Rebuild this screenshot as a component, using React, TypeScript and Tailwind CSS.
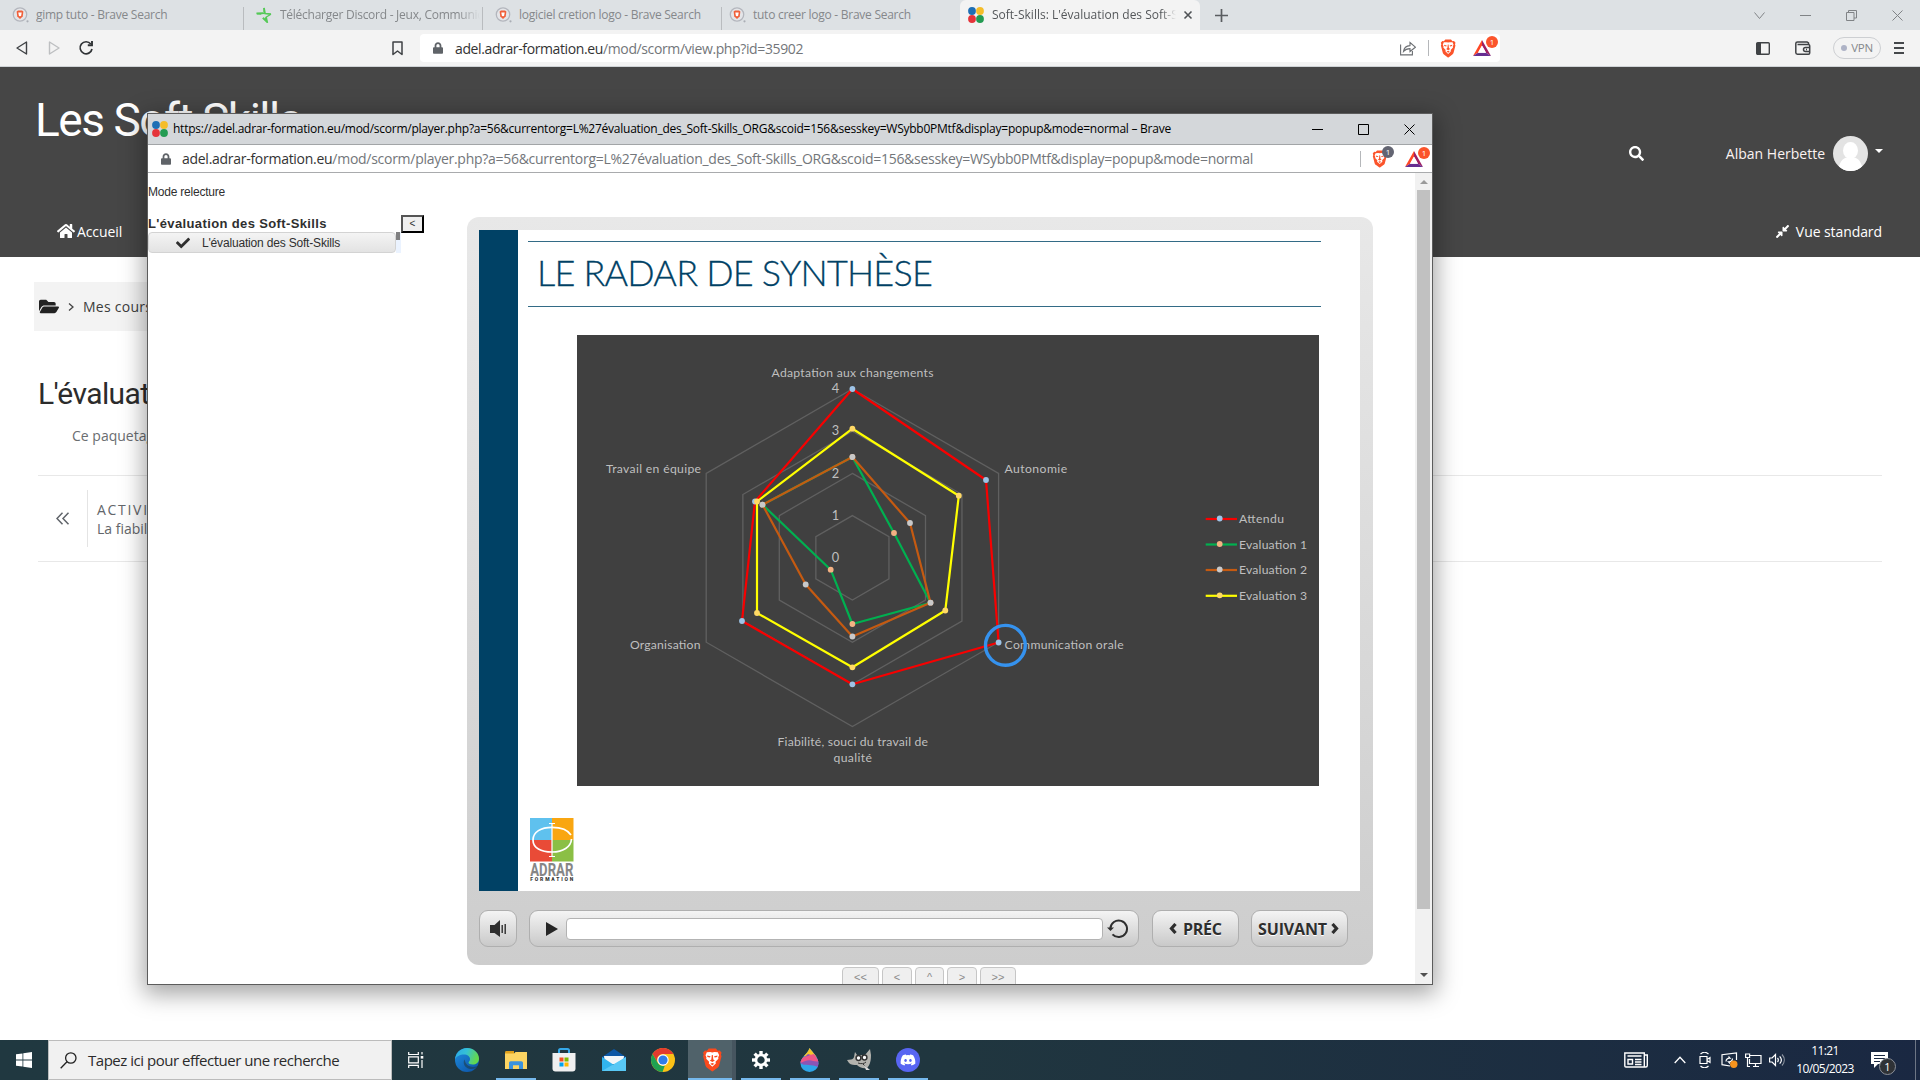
import React from "react";
import {
  FaHome,
  FaFolderOpen,
  FaSearch,
  FaCheck,
  FaCompressAlt,
  FaAngleDoubleLeft,
  FaDiscord,
  FaLock,
} from "react-icons/fa";

const PATH =
  "/mod/scorm/player.php?a=56&currentorg=L%27évaluation_des_Soft-Skills_ORG&scoid=156&sesskey=WSybb0PMtf&display=popup&mode=normal";

/* ---------- Shared icons ---------- */

function BraveIcon({ size = 18, color = "#fb542b", className = "" }: { size?: number; color?: string; className?: string }) {
  return (
    <svg width={size * 0.86} height={size} viewBox="0 0 20 24" className={className}>
      <path
        d="M13.6 0.6 15.4 2.7 17.4 2.4 19.3 4.7 18.6 6.5 19.2 8.3 16.9 17.2c-.4 1.4-.9 2-2 2.8L10.8 23.1c-.5.4-1.1.4-1.6 0L5.1 20c-1.100-.8-1.600-1.400-2-2.800L.8 8.300l.6-1.800L.7 4.700 2.600 2.400l2 .3L6.400.6Z"
        fill={color}
      />
      <path
        d="M10 4.400 12 4l3.500.2L16.800 7.300l-.9 1.900.2 1.500-2.900 3.100.3 1.800L10 18.800 6.500 15.600l.3-1.800-2.900-3.100.2-1.500-.9-1.900L4.500 4.200 8 4Z"
        fill="#fff"
      />
      <path
        d="M4.800 7.400 8.200 8.300 7.600 9.400 5.100 8.900ZM15.200 7.400 11.800 8.300 12.400 9.400 14.900 8.900ZM9.500 7h1l.5 4.500 1.500 1.100L10 14.100 7.500 12.600 9 11.500ZM8 15.700 10 14.900l2 .8-2 1.600Z"
        fill={color}
      />
    </svg>
  );
}

function BatIcon() {
  return (
    <svg width="18" height="16" viewBox="0 0 18 16">
      <path d="M9 0 0 16 5 12.800 9 5.500Z" fill="#ff4724" />
      <path d="M9 0 18 16 13 12.800 9 5.500Z" fill="#9e1f63" />
      <path d="M0 16h18l-5-3.200H5Z" fill="#662d91" />
      <path d="M9 5.500 5 12.800h8Z" fill="#fff" />
    </svg>
  );
}

function Badge({ tone }: { tone: string }) {
  return (
    <span
      className={`absolute -right-[7px] -top-[4px] flex h-3 w-3 items-center justify-center rounded-full text-[8px] leading-none text-white ${tone}`}
    >
      1
    </span>
  );
}

function FourDots() {
  return (
    <svg width="16" height="16" viewBox="0 0 16 16" className="shrink-0">
      <circle cx="4" cy="4" r="3.900" fill="#1f6fb5" />
      <circle cx="12" cy="4" r="3.900" fill="#f5bd2a" />
      <circle cx="4" cy="12" r="3.900" fill="#e5343a" />
      <circle cx="12" cy="12" r="3.900" fill="#249b52" />
    </svg>
  );
}

function SearchFavicon() {
  return (
    <svg width="17" height="17" viewBox="0 0 17 17" className="shrink-0">
      <circle cx="8" cy="7.500" r="6.700" fill="#e4e5e8" stroke="#b3b6bd" strokeWidth="1.300" />
      <path d="M4.600 4.500 6 3.500h4l1.400 1-.7 5L8 12 5.300 9.500Z" fill="#f0603a" />
      <path d="M6.300 5.500h3.400l-.5 2.800L8 9.500 6.800 8.300Z" fill="#fff" />
      <circle cx="15.500" cy="14.300" r="1.100" fill="#aaaeb5" />
    </svg>
  );
}

function Lock() {
  return <FaLock className="h-3 w-[10px] shrink-0 text-[#5f6368]" />;
}

/* ---------- Browser chrome ---------- */

function InactiveTab({ icon, children, width }: { icon: React.ReactNode; children: React.ReactNode; width: string }) {
  return (
    <div className={`flex h-[30px] shrink-0 items-center ${width}`}>
      <div className="ml-3 w-[17px] shrink-0">{icon}</div>
      <div className="ml-[7px] flex-1 overflow-hidden whitespace-nowrap text-[12px] tracking-[-0.26px] text-[#85888b]">
        {children}
      </div>
      <div className="h-[23px] w-px translate-y-[3px] bg-[#b9bcbf]" />
    </div>
  );
}

function TabBar() {
  return (
    <div className="flex h-[30px] items-center bg-[#dde1e4]">
      <InactiveTab icon={<SearchFavicon />} width="w-[244px]">
        gimp tuto - Brave Search
      </InactiveTab>
      <InactiveTab
        width="w-[239px]"
        icon={
          <svg width="16" height="16" viewBox="0 0 16 16">
            <path d="M8 .8 9 6.500 15 7.200M9.500 10.300 10.500 14.500 6.800 11M5.300 7 .5 6.300 7 6" fill="none" stroke="#55c957" strokeWidth="1.700" />
            <path d="M8 1v5.500L1 6.800M15 7.200 10.300 10 11.300 14.800 7 10.800" fill="none" stroke="#55c957" strokeWidth="1.300" />
          </svg>
        }
      >
        <div className="[mask-image:linear-gradient(to_right,black_88%,transparent_99%)]">
          Télécharger Discord - Jeux, Communic
        </div>
      </InactiveTab>
      <InactiveTab icon={<SearchFavicon />} width="w-[239px]">
        logiciel cretion logo - Brave Search
      </InactiveTab>
      <div className="w-[238px]">
        <div className="flex h-[30px] items-center">
          <div className="ml-[7px] w-[17px]"><SearchFavicon /></div>
          <div className="ml-[7px] whitespace-nowrap text-[12px] tracking-[-0.26px] text-[#85888b]">
            tuto creer logo - Brave Search
          </div>
        </div>
      </div>
      <div className="flex h-[30px] w-[240px] items-center rounded-t-md bg-[#f3f3f3]">
        <div className="ml-2"><FourDots /></div>
        <div className="ml-2 w-[184px] overflow-hidden whitespace-nowrap text-[12px] text-[#54575a] [mask-image:linear-gradient(to_right,black_92%,transparent_100%)]">
          Soft-Skills: L'évaluation des Soft-S
        </div>
        <svg width="10" height="10" viewBox="0 0 10 10" className="ml-[7px]">
          <path d="M1.500 1.500 8.500 8.500M8.500 1.500 1.500 8.500" stroke="#505356" strokeWidth="1.600" />
        </svg>
      </div>
      <svg width="13" height="13" viewBox="0 0 13 13" className="ml-[15px]">
        <path d="M6.500 0v13M0 6.500h13" stroke="#5a5d60" strokeWidth="1.700" />
      </svg>
      <div className="ml-auto flex items-center gap-[35px] pr-[17px] text-[#808386]">
        <svg width="11" height="11" viewBox="0 0 11 11" fill="none" stroke="currentColor"><path d="M.5 2.500 5.500 8.500 10.500 2.500" /></svg>
        <svg width="11" height="11" viewBox="0 0 11 11" fill="none" stroke="currentColor"><path d="M0 5.500h11" /></svg>
        <svg width="11" height="11" viewBox="0 0 11 11" fill="none" stroke="currentColor"><path d="M.5 2.500h7.500v8H.5ZM2.500 2.500V.5h8v7.500H8" /></svg>
        <svg width="11" height="11" viewBox="0 0 11 11" fill="none" stroke="currentColor"><path d="M.5.5 10.500 10.500M10.500.5.500 10.500" /></svg>
      </div>
    </div>
  );
}

function Toolbar() {
  return (
    <div className="flex h-[37px] items-center border-b border-[#cfd3d6] bg-[#f3f3f3]">
      <svg width="12" height="14" viewBox="0 0 12 14" className="ml-4" fill="none" stroke="#3f4245" strokeWidth="1.400" strokeLinejoin="round"><path d="M10.500 1v12L1 7Z" /></svg>
      <svg width="12" height="14" viewBox="0 0 12 14" className="ml-5" fill="none" stroke="#bdbfc1" strokeWidth="1.400" strokeLinejoin="round"><path d="M1.500 1v12L11 7Z" /></svg>
      <svg width="16" height="16" viewBox="0 0 16 16" className="ml-[18px]" fill="none" stroke="#303336" strokeWidth="1.700"><path d="M12.800 4A6 6 0 1 0 14 9" /><path d="M9.800 5.200h4.200V1" strokeWidth="1.900" /></svg>
      <svg width="11" height="15" viewBox="0 0 11 15" className="ml-[298px]" fill="none" stroke="#3f4245" strokeWidth="1.500" strokeLinejoin="round"><path d="M1 1h9v12.500L5.500 10 1 13.500Z" /></svg>
      <div className="ml-[17px] flex h-7 w-[1080px] items-center rounded bg-white text-[14px]">
        <div className="ml-[13px]"><Lock /></div>
        <div className="ml-[12px] whitespace-nowrap tracking-[-0.38px]">
          <span className="text-[#333]">adel.adrar-formation.eu</span>
          <span className="text-[#73767a]">/mod/scorm/view.php?id=35902</span>
        </div>
        <svg width="16" height="16" viewBox="0 0 16 16" className="ml-auto" fill="none" stroke="#6b6e72" strokeWidth="1.100"><path d="M.6 4.500v10.400h11.800v-4" /><path d="M3.500 11.500c.5-4 3-5.700 6.500-5.900V2.500l5.400 4.700L10 11.500V8.600c-3 0-4.700.7-6.500 2.900Z" /></svg>
        <div className="ml-3 h-4 w-px bg-[#b5b7ba]" />
        <BraveIcon size={19} className="ml-[11px]" />
        <div className="relative ml-[17px] mr-[9px]"><BatIcon /><Badge tone="bg-[#fb542b]" /></div>
      </div>
      <div className="ml-auto flex items-center pr-4 text-[#3f4245]">
        <svg width="14" height="13" viewBox="0 0 14 13"><rect x=".7" y=".7" width="12.600" height="11.600" rx="1" fill="none" stroke="currentColor" strokeWidth="1.400" /><path d="M1 1h4v11H1Z" fill="currentColor" /></svg>
        <svg width="16" height="14" viewBox="0 0 16 14" className="ml-[25px]" fill="none" stroke="currentColor" strokeWidth="1.500"><path d="M13.500 3.500V2L12 1H2.500C1.200 1 .8 1.600.8 2.500v9c0 1 .6 1.700 1.700 1.700h11c.8 0 1.200-.4 1.200-1.200V4.700c0-.7-.4-1.200-1.200-1.200H2.500" /><path d="M15 6.500h-4.500a2 2 0 0 0 0 4H15M11 8.500h1" /></svg>
        <div className="ml-[22px] flex h-[22px] w-12 items-center justify-center gap-1 rounded-full border border-[#cdcfd2] text-[11.500px] tracking-[-0.3px] text-[#85888c]">
          <span className="h-1.5 w-1.5 rounded-full bg-[#aeb3c6]" />VPN
        </div>
        <svg width="10" height="12" viewBox="0 0 10 12" className="ml-[13px]"><path d="M0 1h10M0 6h10M0 11h10" stroke="#45484b" strokeWidth="1.800" /></svg>
      </div>
    </div>
  );
}

/* ---------- Moodle page ---------- */

function SiteHeader() {
  return (
    <header className="flex h-[190px] flex-col bg-[#464646] text-white">
      <div className="flex h-[138px] items-start">
        <h1 className="ml-[35px] mt-[26px] whitespace-nowrap font-['Roboto'] text-[46px] leading-[54px] tracking-[-1.480px]">Les Soft Skills</h1>
        <div className="ml-auto flex h-[172px] items-center pr-[37px]">
          <FaSearch className="h-[15px] w-[15px]" />
          <div className="ml-[82px] text-[14px] text-[#fbf3f3]">Alban Herbette</div>
          <svg width="35" height="35" viewBox="0 0 35 35" className="ml-2">
            <clipPath id="avatar"><circle cx="17.500" cy="17.500" r="17.500" /></clipPath>
            <g clipPath="url(#avatar)">
              <path d="M0 0h35v35H0Z" fill="#e3e3e3" />
              <ellipse cx="17.500" cy="14.500" rx="7.500" ry="8.500" fill="#fff" />
              <path d="M5.500 35c0-9 5-13 8.500-13.500h7c3.500.5 8.500 4.500 8.500 13.500Z" fill="#fff" />
            </g>
          </svg>
          <div className="ml-[7px] h-0 w-0 -translate-y-[2px] border-x-4 border-t-4 border-x-transparent border-t-white" />
        </div>
      </div>
      <nav className="flex h-[56px] items-center pl-[57px] pr-[38px] text-[14px]">
        <FaHome className="h-[18px] w-[18px]" />
        <span className="ml-[2px] tracking-[-0.1px]">Accueil</span>
        <FaCompressAlt className="ml-auto h-[15px] w-[15px]" />
        <span className="ml-[6px] tracking-[-0.08px]">Vue standard</span>
      </nav>
    </header>
  );
}

function PageBody() {
  return (
    <main className="h-[783px] bg-white pt-[25px]">
      <div className="ml-[34px] flex h-[49px] w-[800px] items-center bg-[#f3f3f3] text-[14px] text-[#3c3c3c]">
        <FaFolderOpen className="ml-[5px] h-[19px] w-5 text-[#222]" />
        <svg width="6" height="8" viewBox="0 0 6 8" className="ml-[9px]"><path d="M1 .5 5 4 1 7.500" fill="none" stroke="#444" strokeWidth="1.300" /></svg>
        <span className="ml-[9px] tracking-[0.25px]">Mes cours</span>
      </div>
      <h2 className="ml-[38px] mt-[45px] font-['Roboto'] text-[30px] font-normal leading-9 tracking-[-0.6px] text-[#2c2c2c]">L'évaluation des Soft-Skills</h2>
      <p className="ml-[72px] mt-[14px] text-[14px] leading-[20px] text-[#6a6d70]">Ce paquetage n'est plus disponible</p>
      <div className="mx-[38px] mt-[29px] flex h-[87px] items-center border-y border-[#e8e8e8]">
        <FaAngleDoubleLeft className="hidden" />
        <svg width="14" height="13" viewBox="0 0 14 13" className="ml-[18px]"><path d="M6.500.7 1 6.500 6.500 12.300M12.500.7 7 6.500 12.500 12.300" fill="none" stroke="#60646a" strokeWidth="1.500" /></svg>
        <div className="ml-[17px] h-[57px] w-px bg-[#e4e4e4]" />
        <div className="ml-[9px] text-[14px] leading-[19px] text-[#63666a]">
          <div className="tracking-[1.7px]">ACTIVITÉ PRÉCÉDENTE</div>
          <div>La fiabilité</div>
        </div>
      </div>
    </main>
  );
}

/* ---------- Radar chart ---------- */

const CX = 852.4;
const CY = 556.8;

const ring = (r: number) =>
  [0, 60, 120, 180, 240, 300]
    .map((a) => {
      const t = (a * Math.PI) / 180;
      return `${CX + r * Math.sin(t)},${CY - r * Math.cos(t)}`;
    })
    .join(" ");

const SERIES = [
  { name: "Attendu", line: "#f80000", dot: "#9dc3e6", ly: 518, w: 45, pts: [[852.4, 388], [986, 479], [998.6, 641.5], [852.4, 683.3], [742, 620], [755, 500.5]] },
  { name: "Evaluation 1", line: "#00b050", dot: "#f4b183", ly: 543.5, w: 68, pts: [[852.4, 456], [894, 532], [930.5, 601.7], [852.4, 623], [830.7, 568.7], [762.5, 503.7]] },
  { name: "Evaluation 2", line: "#c55a11", dot: "#c9c9c9", ly: 569, w: 68, pts: [[852.4, 456], [910, 522], [930.5, 601.7], [852.4, 635.5], [805.7, 583.5], [762.5, 503.7]] },
  { name: "Evaluation 3", line: "#ffff00", dot: "#ffd966", ly: 594.8, w: 68, pts: [[852.4, 427.7], [958.8, 494.7], [945.3, 609.5], [852.4, 666.3], [757, 612], [757, 500.5]] },
];

const LABELS = [
  { t: "Adaptation aux changements", x: 771.5, y: 375.7, w: 162 },
  { t: "Autonomie", x: 1004.6, y: 472.3, w: 62.5 },
  { t: "Communication orale", x: 1004.6, y: 648.3, w: 119 },
  { t: "Fiabilité, souci du travail de", x: 777.5, y: 745, w: 150.5 },
  { t: "qualité", x: 833.5, y: 761, w: 38.5 },
  { t: "Organisation", x: 630, y: 648.3, w: 70.5 },
  { t: "Travail en équipe", x: 606, y: 472.3, w: 95 },
];

function RadarChart() {
  return (
    <svg width="742" height="451" viewBox="577 334 742 451" className="block bg-[#404040]">
      <g fill="none" stroke="#606060" strokeWidth="1.300">
        {[42.2, 84.4, 126.5, 168.8].map((r) => (
          <polygon key={r} points={ring(r)} />
        ))}
      </g>
      {SERIES.map((s) => (
        <g key={s.name}>
          <polygon points={s.pts.map((p) => p.join(",")).join(" ")} fill="none" stroke={s.line} strokeWidth="2.200" strokeLinejoin="round" />
          {s.pts.map(([x, y], i) => (
            <circle key={i} cx={x} cy={y} r="2.900" fill={s.dot} />
          ))}
        </g>
      ))}
      <g fill="#bfbfbf" fontFamily="Lato, sans-serif" fontSize="12.200">
        {LABELS.map((l) => (
          <text key={l.t} x={l.x} y={l.y} textLength={l.w}>{l.t}</text>
        ))}
        {[391.7, 433.7, 477, 519, 561].map((y, i) => (
          <text key={y} x="831.700" y={y} fontSize="12.800">{4 - i}</text>
        ))}
        {SERIES.map((s) => (
          <g key={s.name}>
            <path d={`M1205.700 ${s.ly}h31.300`} stroke={s.line} strokeWidth="2.200" />
            <circle cx="1219.700" cy={s.ly - 0.5} r="2.900" fill={s.dot} />
            <text x="1239" y={s.ly + 4} textLength={s.w}>{s.name}</text>
          </g>
        ))}
      </g>
      <circle cx="1005.400" cy="644.300" r="19.900" fill="none" stroke="#3592ee" strokeWidth="3.400" />
    </svg>
  );
}

function AdrarLogo() {
  return (
    <svg width="46" height="65" viewBox="0 0 46 65">
      <path d="M1 1h22v22H1Z" fill="#5fc1ee" />
      <path d="M23 1h21.500v22H23Z" fill="#f9a611" />
      <path d="M1 23h22v21.500H1Z" fill="#e94b37" />
      <path d="M23 23h21.500v21.500H23Z" fill="#8bbf45" />
      <path d="M42 18C39 13 32 10.300 23 10.300 12 10.300 4 15 4 23s8 12 19 12 19-5 19.500-13" fill="none" stroke="#fff" strokeWidth="1.700" />
      <path d="M23 6v34M20 6.500h6M20 39.500h6" stroke="#fff" strokeWidth="1.200" />
      <text x="1.300" y="58.500" fontFamily="Roboto, sans-serif" fontWeight="700" fontSize="17.500" fill="#868686" textLength="43" lengthAdjust="spacingAndGlyphs">ADRAR</text>
      <text x="1.300" y="63.600" fontFamily="Roboto, sans-serif" fontWeight="900" fontSize="5" fill="#3a3a3a" textLength="43">FORMATION</text>
    </svg>
  );
}

/* ---------- SCORM popup ---------- */

const ctl = "flex items-center rounded-[9px] border border-[#afafaf] bg-gradient-to-b from-[#f4f4f4] to-[#c9c9c9]";

function Player() {
  return (
    <div className="h-[748px] w-[906px] rounded-[12px] bg-gradient-to-b from-[#e8e8e8] to-[#cdcdcd] px-3 pt-[13px]">
      <div className="flex h-[661px] w-[881px] bg-white">
        <div className="w-[39px] bg-[#004165]" />
        <div className="flex flex-1 flex-col">
          <div className="ml-[10px] mt-[11px] flex h-[66px] w-[793px] items-center border-y-[1.500px] border-[#336b86]">
            <div className="ml-[9px] -translate-y-[2px] whitespace-nowrap font-['Lato'] text-[36px] font-light leading-none tracking-[-0.79px] text-[#004165] [-webkit-text-stroke:0.300px_#004165]">
              LE RADAR DE SYNTHÈSE
            </div>
          </div>
          <div className="ml-[59px] mt-[28px]"><RadarChart /></div>
          <div className="ml-[11px] mt-[31px]"><AdrarLogo /></div>
        </div>
      </div>
      <div className="mt-[19px] flex h-[37px] text-[16px] font-bold text-[#2e2e2e] [text-shadow:0_1px_0_#fff]">
        <div className={`w-[38px] justify-center ${ctl}`}>
          <svg width="18" height="18" viewBox="0 0 18 18"><path d="M1 5h4.500L11 0v17L5.500 13H1Z" fill="#2e2e2e" /><path d="M13.200 5v8M16.200 4v10" stroke="#2e2e2e" strokeWidth="1.400" /></svg>
        </div>
        <div className={`ml-3 w-[610px] ${ctl}`}>
          <svg width="12" height="14" viewBox="0 0 12 14" className="ml-4"><path d="M0 0v14L12 7Z" fill="#262626" /></svg>
          <div className="ml-[8px] h-[22px] w-[537px] rounded border border-[#b3b3b3] bg-white" />
          <svg width="22" height="20" viewBox="0 0 22 20" className="ml-[4px]"><path d="M3.400 9.500A8.300 8.300 0 1 1 5.500 15.300" fill="none" stroke="#2e2e2e" strokeWidth="2" /><path d="M0 8.500h7L3.500 12Z" fill="#2e2e2e" /></svg>
        </div>
        <div className={`ml-[13px] w-[87px] ${ctl}`}>
          <svg width="8" height="11" viewBox="0 0 8 11" className="ml-[16px]"><path d="M6.500 1 2.500 5.500 6.500 10" fill="none" stroke="#2e2e2e" strokeWidth="3.200" /></svg>
          <span className="ml-[6px] tracking-[-0.300px]">PRÉC</span>
        </div>
        <div className={`ml-3 w-[97px] ${ctl}`}>
          <span className="ml-[6px] tracking-[-0.130px]">SUIVANT</span>
          <svg width="8" height="11" viewBox="0 0 8 11" className="ml-[4px]"><path d="M1.500 1 5.500 5.500 1.500 10" fill="none" stroke="#2e2e2e" strokeWidth="3.200" /></svg>
        </div>
      </div>
    </div>
  );
}

function NavButtons() {
  const b = "h-[24px] rounded-t border border-[#c6c6c6] bg-[#efefef] pt-[2px] text-center font-['Liberation_Sans'] text-[11px] leading-[14px] text-[#8a8a8a]";
  return (
    <div className="ml-[375px] mt-[2px] flex h-[18px] gap-[3px] overflow-hidden">
      <div className={`w-[37px] ${b}`}>&lt;&lt;</div>
      <div className={`w-[30px] ${b}`}>&lt;</div>
      <div className={`w-[29px] ${b}`}>^</div>
      <div className={`w-[30px] ${b}`}>&gt;</div>
      <div className={`w-[36px] ${b}`}>&gt;&gt;</div>
    </div>
  );
}

function Popup() {
  return (
    <section className="absolute left-[147px] top-[113px] flex h-[872px] w-[1286px] flex-col border border-[#5c5c5c] bg-white shadow-[0_6px_22px_3px_rgba(0,0,0,0.36)]">
      <div className="flex h-[31px] shrink-0 items-center border-b border-[#a2a5a7] bg-[#d4d7da] text-[12px] text-black">
        <div className="ml-1"><FourDots /></div>
        <div className="ml-[5px] whitespace-nowrap tracking-[-0.247px]">https://adel.adrar-formation.eu{PATH} – Brave</div>
        <div className="ml-auto flex gap-[35px] pr-[17px]">
          <svg width="11" height="11" viewBox="0 0 11 11" fill="none" stroke="#000"><path d="M0 5.500h11" /></svg>
          <svg width="11" height="11" viewBox="0 0 11 11" fill="none" stroke="#000"><path d="M.5.500h10v10h-10Z" /></svg>
          <svg width="11" height="11" viewBox="0 0 11 11" fill="none" stroke="#000"><path d="M.5.500 10.500 10.500M10.500.5.500 10.500" /></svg>
        </div>
      </div>
      <div className="flex h-[28px] shrink-0 items-center border-b border-[#a9abad] bg-white text-[14px]">
        <div className="ml-[13px]"><Lock /></div>
        <div className="ml-[11px] whitespace-nowrap tracking-[-0.278px]">
          <span className="text-[#333]">adel.adrar-formation.eu</span>
          <span className="text-[#73767a]">{PATH}</span>
        </div>
        <div className="ml-auto h-4 w-px bg-[#b5b7ba]" />
        <div className="relative ml-[11px]"><BraveIcon size={18} /><Badge tone="bg-[#636572]" /></div>
        <div className="relative ml-[18px] mr-[9px]"><BatIcon /><Badge tone="bg-[#fb542b]" /></div>
      </div>
      <div className="flex flex-1 overflow-hidden">
        <div className="flex w-[319px] flex-col font-['Liberation_Sans'] text-[12px] text-[#2f2f2f]">
          <div className="mt-[12px] leading-[15px] tracking-[-0.220px]">Mode relecture</div>
          <div className="mt-[15px] flex h-[38px]">
            <div className="w-[253px]">
              <div className="flex h-[17px] items-end text-[13px] font-bold leading-[16px] tracking-[0.370px]">L'évaluation des Soft-Skills</div>
              <div className="flex h-[21px]">
                <div className="flex w-[248px] items-center rounded-sm border border-[#d3d3d3] bg-gradient-to-b from-[#f4f4f4] to-[#e3e3e3]">
                  <FaCheck className="ml-[27px] h-[14px] w-[14px]" />
                  <span className="ml-[12px] tracking-[-0.180px]">L'évaluation des Soft-Skills</span>
                </div>
                <div className="w-[5px] bg-[#ebf3ff]">
                  <div className="h-2 w-1 bg-[radial-gradient(#777_0.7px,transparent_0.8px)] [background-size:2px_2px]" />
                </div>
              </div>
            </div>
            <div className="flex h-[18px] w-[23px] items-center justify-center border-2 border-b-black border-l-[#555] border-r-black border-t-[#555] bg-[#efefef] text-[10px] leading-none">&lt;</div>
          </div>
        </div>
        <div className="mt-[44px]">
          <Player />
          <NavButtons />
        </div>
        <div className="ml-auto flex w-[17px] flex-col items-center bg-[#f1f1f1]">
          <div className="mt-[7px] h-0 w-0 border-x-4 border-b-4 border-x-transparent border-b-[#9a9a9a]" />
          <div className="mt-[6px] h-[719px] w-[13px] bg-[#c1c1c1]" />
          <div className="mb-[7px] mt-auto h-0 w-0 border-x-4 border-t-4 border-x-transparent border-t-[#505050]" />
        </div>
      </div>
    </section>
  );
}

/* ---------- Taskbar ---------- */

function Slot({ children, open = false, className = "w-10 mx-[4.500px]" }: { children: React.ReactNode; open?: boolean; className?: string }) {
  return (
    <div className={`flex h-10 flex-col items-center ${className}`}>
      <div className="flex h-[38px] items-center pt-[2px]">{children}</div>
      <div className={`h-[2px] w-full ${open ? "bg-[#76b9ed]" : ""}`} />
    </div>
  );
}

function Taskbar() {
  return (
    <footer className="flex h-10 items-center bg-gradient-to-r from-[#203840] via-[#20363f] to-[#1a2842] text-white">
      <div className="flex w-12 justify-center">
        <svg width="16" height="16" viewBox="0 0 16 16" fill="#fff"><path d="M0 2.300 6.500 1.400v6.200H0ZM7.300 1.300 16 0v7.600H7.300ZM0 8.400h6.500v6.200L0 13.700ZM7.300 8.400H16V16L7.300 14.700Z" /></svg>
      </div>
      <div className="flex h-10 w-[344px] items-center border border-[#bcbcbc] bg-[#f1f1f1] text-[15px] text-[#2b2b2b]">
        <svg width="17" height="17" viewBox="0 0 17 17" className="ml-[11px]" fill="none" stroke="#222" strokeWidth="1.300"><circle cx="10.800" cy="6" r="5.200" /><path d="M7 9.800.7 16.300" /></svg>
        <span className="ml-[11px] whitespace-nowrap tracking-[-0.480px]">Tapez ici pour effectuer une recherche</span>
      </div>
      <div className="flex w-12 justify-center">
        <svg width="16" height="16" viewBox="0 0 16 16" fill="none" stroke="#fff" strokeWidth="1.200"><path d="M.7 0v2.500h9.600V0M.7 4.800h9.600v6H.7ZM.7 16v-2.700h9.600V16M14 0v2.500M14 8v8" /><path d="M12.700 4h2.600v2.600h-2.600Z" fill="#fff" stroke="none" /></svg>
      </div>
      <Slot className="w-[48px] ml-[3px] mr-[5px]">
        <svg width="24" height="24" viewBox="0 0 24 24">
          <defs>
            <linearGradient id="edgeTop" x1="0" x2="1" y1="0" y2=".3"><stop offset="0" stopColor="#2aa6ea" /><stop offset=".5" stopColor="#35c1d6" /><stop offset="1" stopColor="#62d84e" /></linearGradient>
            <linearGradient id="edgeLow" x1="0" x2=".8" y1="0" y2="1"><stop offset="0" stopColor="#1f90e2" /><stop offset="1" stopColor="#0d55a8" /></linearGradient>
          </defs>
          <circle cx="12" cy="12" r="12" fill="url(#edgeLow)" />
          <path d="M0 11.500C.5 5 5.500 0 12 0s12 5 12 10.500c0 4-3 6-6.200 6-2.800 0-4.300-1-4.300-2 0-.7 1.500-1.300 1.500-3.500C15 8.500 12.500 6.500 9 6.500c-4 0-8 2-9 5Z" fill="url(#edgeTop)" />
          <path d="M9.500 11.500c-2 3.500 0 8.500 5.500 9.500 3.500.5 6-1 7.500-3-5 2-10.500.5-12-3.500-.4-1-.6-2-1-3Z" fill="#203840" opacity=".55" />
        </svg>
      </Slot>
      <Slot open className="w-10">
        <svg width="22" height="19" viewBox="0 0 22 19"><path d="M0 1.500C0 .5.500 0 1.500 0H9v3H0Z" fill="#e0a01b" /><path d="M0 2.500h9l1.500-1.500H22V18H0Z" fill="#fcd462" /><path d="M4 18v-6c0-1 .7-1.700 1.700-1.700h10.600c1 0 1.700.7 1.700 1.700v6h-4v-3.700H8V18Z" fill="#3b92dd" /></svg>
      </Slot>
      <Slot className="ml-2 w-10">
        <svg width="24" height="24" viewBox="0 0 24 24"><path d="M7 6V2.500C7 1.500 7.500 1 8.500 1h7c1 0 1.500.5 1.500 1.500V6" fill="none" stroke="#35a9ea" strokeWidth="2" /><path d="M.5 5h23v15.500c0 2-1 3-3 3h-17c-2 0-3-1-3-3Z" fill="#f0f0f0" /><path d="M7.500 9.500h4v4h-4Z" fill="#f25022" /><path d="M12.500 9.500h4v4h-4Z" fill="#7fba00" /><path d="M7.500 14.500h4v4h-4Z" fill="#00a4ef" /><path d="M12.500 14.500h4v4h-4Z" fill="#ffb900" /></svg>
      </Slot>
      <Slot className="ml-[10px] w-10">
        <svg width="24" height="22" viewBox="0 0 24 22"><path d="M0 8 12 0 24 8v6H0Z" fill="#0d57a5" /><path d="M2 7h20l-1 8H3Z" fill="#f3f6f8" /><path d="M0 8 12 16 24 8v14H0Z" fill="#31b4ee" /><path d="M0 22 24 8v14Z" fill="#58c8f5" /></svg>
      </Slot>
      <Slot className="ml-[9px] w-10">
        <svg width="24" height="24" viewBox="0 0 24 24"><circle cx="12" cy="12" r="12" fill="#fbc116" /><path d="M1.600 6A12 12 0 0 1 22.400 6H12a6 6 0 0 0-5.200 9Z" fill="#e33b2e" /><path d="M1.600 6 6.800 15a6 6 0 0 0 7 2.700L11.500 24A12 12 0 0 1 1.600 6Z" fill="#1fa251" /><circle cx="12" cy="12" r="5.700" fill="#fff" /><circle cx="12" cy="12" r="4.600" fill="#2f7ce8" /></svg>
      </Slot>
      <Slot open className="ml-[5px] w-[48px] border-r-4 border-[#46555f] bg-[#50626a]">
        <BraveIcon size={24} color="#fb4a1d" className="ml-1" />
      </Slot>
      <Slot open className="ml-[5px] w-10">
        <svg width="18" height="18" viewBox="-9 -9 18 18"><circle r="5" fill="none" stroke="#fff" strokeWidth="2.600" />{[0, 45, 90, 135, 180, 225, 270, 315].map((a) => (<path key={a} d="M-1.700-9h3.400v3.500h-3.400Z" fill="#fff" transform={`rotate(${a})`} />))}</svg>
      </Slot>
      <Slot open className="ml-[9px] w-10">
        <svg width="20" height="24" viewBox="0 0 20 24"><clipPath id="drop"><path d="M9.500 0C13 5 18.500 9 18.500 15.500a9 8.500 0 0 1-18 0C.5 9 8 6 9.500 0Z" /></clipPath><g clipPath="url(#drop)"><path d="M0 0h20v24H0Z" fill="#2ea5e8" /><path d="M0 0h20v9L0 8Z" fill="#f7c32b" /><path d="M0 13 8 6l6 2 6 6v6C12 15 5 19 0 15Z" fill="#8a55b5" /><path d="M0 13C3 7 8 9 10 7l4-1 6 8-7-1C8 11 4 14 0 15Z" fill="#ee5687" /></g></svg>
      </Slot>
      <Slot open className="ml-[9px] w-10">
        <svg width="24" height="22" viewBox="0 0 24 22"><path d="M8 3 10 6h8L23 0l1 6c0 8-2 11-4 13-4 1-8-1-10-3-3 0-6 0-8-2L0 11l4-.5C8 10 7 6 8 3Z" fill="#b3b3ae" /><circle cx="11.500" cy="9" r="2.400" fill="#fff" stroke="#333" strokeWidth="1.500" /><circle cx="17.500" cy="8.500" r="2.400" fill="#fff" stroke="#333" strokeWidth="1.500" /><path d="M11 14c3 1 6 1 8-1M16 15l6 6" fill="none" stroke="#333" /><path d="M17 16l6 5-4 0Z" fill="#ddd" /></svg>
      </Slot>
      <Slot open className="ml-[9px] w-10">
        <div className="flex h-6 w-6 items-center justify-center rounded-full bg-[#5865f2]"><FaDiscord className="h-[16px] w-[16px]" /></div>
      </Slot>
      <div className="ml-auto flex h-10 items-center">
        <svg width="24" height="16" viewBox="0 0 24 16" fill="none" stroke="#fff" strokeWidth="1.400"><path d="M.8 1h19.500v14H2C1.200 15 .8 14.600.8 14ZM20.300 3h3v10.500c0 1-.6 1.500-1.500 1.500h-3M3.500 4h14M11 7.500h6.500M11 10h6.500M11 12.500h6.500" /><path d="M4 7.500h4.500V12H4Z" /></svg>
        <svg width="12" height="8" viewBox="0 0 12 8" className="ml-[26px]" fill="none" stroke="#fff" strokeWidth="1.300"><path d="M.7 7 6 1.300 11.300 7" /></svg>
        <svg width="12" height="16" viewBox="0 0 12 16" className="ml-[13px]" fill="none" stroke="#fff" strokeWidth="1.200"><path d="M1 4.500h7v7H1ZM8 7.500 11 5.500v5L8 8.500M1.500 2C4-.2 7-.2 9.500 2M1.500 14c2.500 2.200 5.500 2.200 8 0" /></svg>
        <svg width="17" height="16" viewBox="0 0 17 16" className="ml-[10px]" fill="none" stroke="#fff" strokeWidth="1.200"><path d="M15.500 8V1L1 2.700v10L9 14M5 9.500c0-2 1.500-3.500 4-3.300L7.500 4.500M11.500 6.500c0 2-1.500 3.500-4 3.300l1.500 1.700" /><circle cx="12.800" cy="12.200" r="3.700" fill="#f7941d" stroke="none" /></svg>
        <svg width="17" height="15" viewBox="0 0 17 15" className="ml-[7px]" fill="none" stroke="#fff" strokeWidth="1.200"><path d="M5 2.500h11v8H4.500V6M8 13.500h6M10.500 10.500v3M.6 1h4v3.500h-4ZM2.500 4.500v9H5" /></svg>
        <svg width="17" height="14" viewBox="0 0 17 14" className="ml-[7px]" fill="none" stroke="#fff" strokeWidth="1.200"><path d="M.6 5h2.500L6.500 1.500v11L3.100 9H.6ZM8.500 5c1 1.200 1 2.800 0 4M10.700 3.300c2 2.200 2 5.200 0 7.400" /><path d="M13 1.500c3 3.300 3 7.700 0 11" opacity=".5" /></svg>
        <div className="ml-[9px] w-[60px] text-center text-[12px] leading-[18px] tracking-[-0.640px]"><div>11:21</div><div>10/05/2023</div></div>
        <div className="relative ml-[16px] mr-[27px]">
          <svg width="17" height="16" viewBox="0 0 17 16"><path d="M0 0h17v12H7l-4 4v-4H0Z" fill="#fff" /><path d="M3 3.500h11M3 6.500h11M3 9.500h6" stroke="#1b2942" strokeWidth="1.200" /></svg>
          <span className="absolute -bottom-[7px] -right-[8px] flex h-[17px] w-[17px] items-center justify-center rounded-full border border-[#8a8f98] bg-[#2f3236] text-[11px] leading-none">1</span>
        </div>
        <div className="mr-1 h-10 w-px bg-[#6d7685]" />
      </div>
    </footer>
  );
}

export default function App() {
  return (
    <div className="relative flex h-[1080px] w-[1920px] flex-col overflow-hidden bg-white font-['Open_Sans',sans-serif]">
      <TabBar />
      <Toolbar />
      <SiteHeader />
      <PageBody />
      <Taskbar />
      <Popup />
    </div>
  );
}
